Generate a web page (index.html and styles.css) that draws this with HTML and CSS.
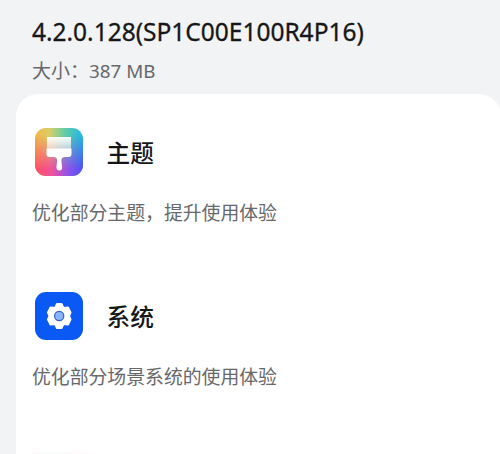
FILE: index.html
```html
<!DOCTYPE html>
<html lang="zh-CN">
<head>
<meta charset="utf-8">
<title>4.2.0.128</title>
<link rel="stylesheet" href="styles.css">
</head>
<body>
<header class="header">
  <h1 class="version">4.2.0.128(SP1C00E100R4P16)</h1>
  <p class="size">大小：<span class="amount">387 MB</span></p>
</header>
<main class="card">
  <section class="item">
    <div class="row">
      <svg class="icon" viewBox="0 0 48 48">
        <defs>
          <linearGradient id="top" x1="0" y1="0" x2="1" y2="0">
            <stop offset="0" stop-color="#f5b545"/><stop offset=".3" stop-color="#d9cf68"/><stop offset=".62" stop-color="#62cda6"/><stop offset="1" stop-color="#20b5e8"/>
          </linearGradient>
          <linearGradient id="bottom" x1="0" y1="0" x2="1" y2="0">
            <stop offset="0" stop-color="#ff5062"/><stop offset=".35" stop-color="#ed529b"/><stop offset=".68" stop-color="#9254e8"/><stop offset="1" stop-color="#4c50f5"/>
          </linearGradient>
          <linearGradient id="fade" x1="0" y1="0" x2="0" y2="1">
            <stop offset=".15" stop-color="#fff" stop-opacity="0"/><stop offset=".85" stop-color="#fff"/>
          </linearGradient>
          <linearGradient id="bristle" x1="0" y1="0" x2="0" y2="1">
            <stop offset="0" stop-color="#fff" stop-opacity=".95"/><stop offset="1" stop-color="#fff" stop-opacity=".5"/>
          </linearGradient>
          <mask id="blend"><rect width="48" height="48" fill="url(#fade)"/></mask>
        </defs>
        <rect width="48" height="48" rx="11" fill="url(#top)"/>
        <rect width="48" height="48" rx="11" fill="url(#bottom)" mask="url(#blend)"/>
        <path d="M12 9H36V21H12Z" fill="url(#bristle)"/>
        <path d="M11.500 20.500H36.500V26Q36.500 29 33.500 29H30Q26.500 29 26.500 32V34L27.200 39.500A2.900 2.900 0 0 1 21.400 39.500L22 34V32Q22 29 18.500 29H14.500Q11.500 29 11.500 26Z" fill="#fff"/>
      </svg>
      <h2 class="title">主题</h2>
    </div>
    <p class="desc">优化部分主题，提升使用体验</p>
  </section>
  <section class="item">
    <div class="row">
      <svg class="icon" viewBox="0 0 48 48">
        <rect width="48" height="48" rx="11" fill="#0b59f4"/>
        <path d="M22 12H26.500L28.500 16L33 15.500L35.500 20.500L34 24L35.500 27.500L33 32.500L28.500 32L26.500 36H22L20 32L15.500 32.500L13 27.500L14.500 24L13 20.500L15.500 15.500L20 16Z" fill="#fff" stroke="#fff" stroke-width="2" stroke-linejoin="round"/>
        <circle cx="24.200" cy="24" r="4.600" fill="#8bb4ff" stroke="#2e5fc4" stroke-width="1.200"/>
      </svg>
      <h2 class="title">系统</h2>
    </div>
    <p class="desc">优化部分场景系统的使用体验</p>
  </section>
  <div class="next"></div>
</main>
</body>
</html>
```
FILE: styles.css
```css
* { box-sizing: border-box; margin: 0; padding: 0; }
body {
  height: 454px;
  overflow: hidden;
  background: #f2f3f5;
  font-family: "Noto Sans", "Noto Sans CJK SC", sans-serif;
  color: #161718;
}
.header { height: 94px; padding: 14px 0 0 32px; }
.version {
  font-size: 24.5px;
  line-height: 36px;
  font-weight: 400;
  letter-spacing: -0.01px;
  white-space: nowrap;
  -webkit-text-stroke: 0.3px #161718;
}
.size {
  margin-top: 6px;
  font-family: "Noto Sans CJK SC", sans-serif;
  font-size: 19px;
  line-height: 28px;
  color: #66686a;
}
.amount { font-family: "Noto Sans", sans-serif; font-size: 18.8px; }
.card {
  width: 485px;
  height: 360px;
  margin-left: 16px;
  padding: 34px 16px 0;
  overflow: hidden;
  background: #fff;
  border-radius: 22px 22px 0 0;
  font-family: "Noto Sans CJK SC", sans-serif;
}
.item { height: 164px; }
.row { display: flex; align-items: center; height: 48px; padding-left: 2.5px; }
.icon { width: 48px; height: 48px; flex: none; }
.title {
  margin-left: 24px;
  font-size: 23.7px;
  line-height: 36px;
  font-weight: 500;
}
.desc {
  margin-top: 22px;
  font-size: 18.85px;
  line-height: 28px;
  color: #66686a;
  white-space: nowrap;
}
.next { width: 64px; height: 8px; background: linear-gradient(90deg, #fffafa, #f6fdfb, #fff8fa, #fff); margin-top: -4px; }
```
